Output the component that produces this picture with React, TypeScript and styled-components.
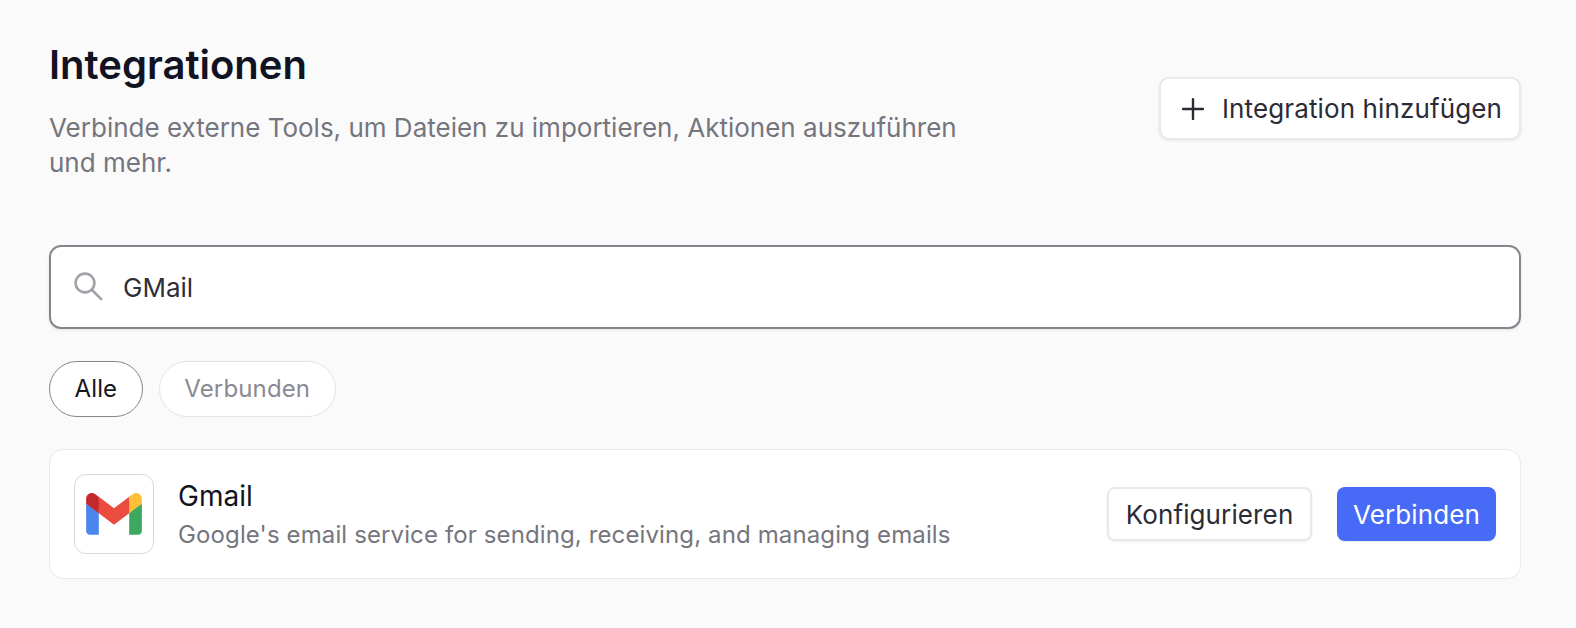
import React from "react";
import styled, { createGlobalStyle } from "styled-components";
import { Plus } from "lucide-react";

const GlobalStyle = createGlobalStyle`
  html, body {
    margin: 0;
    background: #fafafa;
    font-family: Inter, "Liberation Sans", sans-serif;
  }
`;

const GmailLogo = () => (
  <svg width="56" height="42" viewBox="0 0 256 193" aria-hidden="true">
    <path fill="#4A86EE" d="M58.182 192.05V93.14L27.507 65.077 0 49.504v125.091c0 9.658 7.825 17.455 17.455 17.455h40.727Z" />
    <path fill="#3DA860" d="M197.818 192.05h40.727c9.659 0 17.455-7.826 17.455-17.455V49.505l-31.156 17.837-27.026 25.798v98.91Z" />
    <path fill="#EA4C40" d="m58.182 93.14-4.174-38.647 4.174-36.989L128 69.868l69.818-52.364 4.669 34.992-4.669 40.644L128 145.504z" />
    <path fill="#FDBE38" d="M197.818 17.504V93.14L256 49.504V26.231c0-21.585-24.64-33.89-41.89-20.945l-16.292 12.218Z" />
    <path fill="#C3282A" d="m0 49.504 26.759 20.07L58.182 93.14V17.504L41.89 5.286C24.61-7.66 0 4.646 0 26.23v23.273Z" />
  </svg>
);

const SearchIcon = () => (
  <svg width="30" height="30" viewBox="0 0 30 30" fill="none" stroke="#a1a1aa" strokeWidth="2.6" strokeLinecap="round" aria-hidden="true">
    <circle cx="11" cy="11" r="9.4" />
    <line x1="18" y1="18" x2="27.2" y2="27.2" />
  </svg>
);

export default function App() {
  return (
    <>
      <GlobalStyle />
      <Page>
        <Header>
          <HeaderText>
            <Title>Integrationen</Title>
            <Subtitle>
              Verbinde externe Tools, um Dateien zu importieren, Aktionen auszuführen und mehr.
            </Subtitle>
          </HeaderText>
          <AddButton>
            <Plus size={34} strokeWidth={1.7} />
            Integration hinzufügen
          </AddButton>
        </Header>
        <SearchBox>
          <SearchIcon />
          <SearchValue>GMail</SearchValue>
        </SearchBox>
        <Pills>
          <Pill $active>Alle</Pill>
          <Pill>Verbunden</Pill>
        </Pills>
        <Card>
          <LogoTile>
            <GmailLogo />
          </LogoTile>
          <CardText>
            <CardName>Gmail</CardName>
            <CardDescription>Google's email service for sending, receiving, and managing emails</CardDescription>
          </CardText>
          <CardActions>
            <ConfigureButton>Konfigurieren</ConfigureButton>
            <ConnectButton>Verbinden</ConnectButton>
          </CardActions>
        </Card>
      </Page>
    </>
  );
}

const Page = styled.div`
  box-sizing: border-box;
  width: 1576px;
  height: 628px;
  padding: 41px 55px 0 49px;
  overflow: hidden;
`;

const Header = styled.div`
  display: flex;
  justify-content: space-between;
  align-items: flex-start;
`;

const HeaderText = styled.div`
  width: 920px;
`;

const Title = styled.h1`
  margin: 0 0 21px;
  font-size: 40px;
  line-height: 48px;
  font-weight: 600;
  color: #111322;
`;

const Subtitle = styled.p`
  margin: 0;
  font-size: 26px;
  line-height: 35px;
  color: #75757e;
`;

const AddButton = styled.button`
  display: flex;
  align-items: center;
  gap: 12px;
  box-sizing: border-box;
  width: 362px;
  height: 63px;
  margin-top: 36px;
  padding: 0 14px 0 15px;
  background: #fff;
  border: 2px solid #e8e8ee;
  border-radius: 10px;
  box-shadow: 0 1px 3px rgba(16, 24, 40, 0.08);
  font: 430 26px Inter, sans-serif;
  letter-spacing: 0.12px;
  white-space: nowrap;
  color: #2b2b35;
`;

const SearchBox = styled.div`
  display: flex;
  align-items: center;
  gap: 19px;
  box-sizing: border-box;
  height: 84px;
  margin-top: 65px;
  padding: 0 23px;
  background: #fff;
  border: 2px solid #85858d;
  border-radius: 12px;
  box-shadow: 0 1px 3px rgba(16, 24, 40, 0.1);
`;

const SearchValue = styled.span`
  font-size: 26px;
  color: #2f2f39;
`;

const Pills = styled.div`
  display: flex;
  gap: 16px;
  margin-top: 32px;
`;

const Pill = styled.div<{ $active?: boolean }>`
  display: flex;
  align-items: center;
  box-sizing: border-box;
  height: 56px;
  padding: 0 24.5px 2px;
  background: #fff;
  border: 1px solid ${(p) => (p.$active ? "#85858d" : "#e4e4e7")};
  border-radius: 28px;
  font-size: 24px;
  font-weight: 430;
  letter-spacing: 0.14px;
  color: ${(p) => (p.$active ? "#18181f" : "#8a8a92")};
`;

const Card = styled.div`
  display: flex;
  align-items: center;
  box-sizing: border-box;
  height: 130px;
  margin-top: 32px;
  padding: 0 24px;
  background: #fff;
  border: 1px solid #e9e9ec;
  border-radius: 14px;
`;

const LogoTile = styled.div`
  display: flex;
  align-items: center;
  justify-content: center;
  width: 80px;
  height: 80px;
  flex-shrink: 0;
  box-sizing: border-box;
  background: #fff;
  border: 1px solid #d8d8dc;
  border-radius: 12px;
`;

const CardText = styled.div`
  flex: 1;
  margin: 4px 0 0 24px;
`;

const CardName = styled.div`
  font-size: 28px;
  line-height: 38px;
  font-weight: 430;
  color: #111322;
`;

const CardDescription = styled.div`
  font-size: 24px;
  line-height: 40px;
  letter-spacing: 0.12px;
  color: #75757e;
`;

const CardActions = styled.div`
  display: flex;
  gap: 25px;
`;

const ConfigureButton = styled.button`
  box-sizing: border-box;
  width: 205px;
  height: 54px;
  background: #fff;
  border: 2px solid #e8e8ee;
  border-radius: 8px;
  box-shadow: 0 1px 3px rgba(16, 24, 40, 0.08);
  font: 430 26px Inter, sans-serif;
  letter-spacing: 0.12px;
  color: #2b2b35;
`;

const ConnectButton = styled.button`
  box-sizing: border-box;
  width: 159px;
  height: 54px;
  background: #476bf6;
  border: none;
  border-radius: 8px;
  box-shadow: 0 1px 2px rgba(16, 24, 40, 0.1);
  font: 430 26px Inter, sans-serif;
  letter-spacing: 0.12px;
  color: #fff;
`;
